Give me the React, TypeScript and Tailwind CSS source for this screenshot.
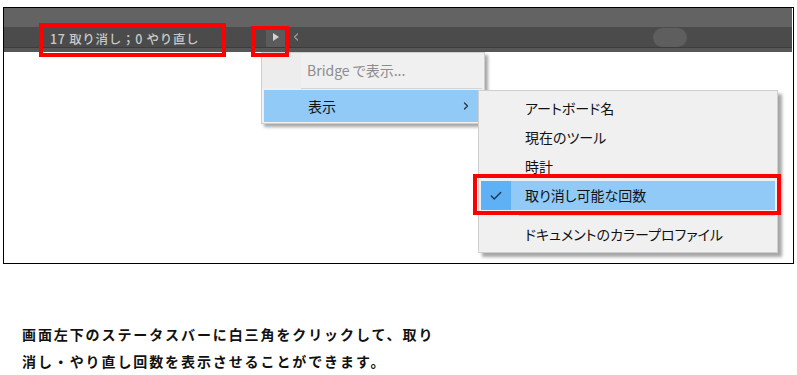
import { Check, ChevronRight, ChevronLeft } from "lucide-react";

const jp = "font-['Noto_Sans_CJK_JP','Noto_Sans',sans-serif] [font-feature-settings:'palt']";

function SubItem({ label, checked = false }: { label: string; checked?: boolean }) {
  if (checked) {
    return (
      <div className="mx-[2px] flex h-[29px] items-center bg-[#91c9f7]">
        <div className="flex h-full w-[30px] items-center justify-center bg-[#5eb1f5]">
          <Check className="h-[14px] w-[14px] text-[#1f3a52]" strokeWidth={2.5} />
        </div>
        <span className="pl-[14px] text-[14px] text-[#111]">{label}</span>
      </div>
    );
  }
  return (
    <div className="flex h-[29px] items-center pl-[46px]">
      <span className="text-[14px] text-[#111]">{label}</span>
    </div>
  );
}

export default function App() {
  return (
    <div className={`relative h-[375px] w-[797px] overflow-hidden bg-white ${jp}`}>
      {/* screenshot frame */}
      <div className="ml-[3px] mt-[7px] flex h-[257px] w-[791px] flex-col border border-black bg-white">
        <div className="h-[19px] w-[788px] bg-[#636363]" />
        <div className="flex h-[20px] w-[788px] items-center bg-[#4b4b4b]">
          <div className="w-[262px] shrink-0 pl-[46px]">
            <span className="text-[12.5px] font-medium tracking-[0.7px] text-[#c8c8c8] [font-feature-settings:normal]">
              17 取り消し；0 やり直し
            </span>
          </div>
          <div className="flex h-[19px] w-[20px] shrink-0 items-center justify-center bg-[#5b5b5b]">
            <svg width="6" height="8" viewBox="0 0 6 8">
              <path d="M0 0 L6 4 L0 8 Z" fill="#d2d2d2" />
            </svg>
          </div>
          <div className="w-[367px] shrink-0 pl-[4px]">
            <ChevronLeft className="h-[12px] w-[12px] text-[#9a9a9a]" strokeWidth={2.5} />
          </div>
          <div className="h-[19px] w-[34px] shrink-0 rounded-full bg-[#5e5e5e]" />
        </div>
        <div className="h-px w-[788px] bg-[#3c3c3c]" />
        <div className="h-[4px] w-[788px] bg-[#575757]" />
      </div>

      {/* caption */}
      <div className="ml-[22px] mt-[57px] text-[14px] font-bold leading-[27px] tracking-[1.9px] text-[#111] [font-feature-settings:normal]">
        <p>画面左下のステータスバーに白三角をクリックして、取り</p>
        <p>消し・やり直し回数を表示させることができます。</p>
      </div>

      {/* context menu */}
      <div className="absolute left-[261px] top-[52px] h-[72px] w-[224px] border border-[#cfcfcf] bg-[#f0f0f0] shadow-[3px_3px_3px_rgba(0,0,0,0.35)]">
        <div className="flex h-[35px]">
          <div className="w-[39px] bg-[#ededed]" />
          <div className="flex flex-1 items-center pl-[6px] text-[14px] text-[#8c8c8c]">Bridge で表示...</div>
        </div>
        <div className="ml-[39px] mr-[2px] h-px bg-[#d4d4d4]" />
        <div className="mx-[2px] mt-[1px] flex h-[32px] items-center justify-between bg-[#91c9f7] pl-[44px] pr-[10px]">
          <span className="text-[14px] text-[#111]">表示</span>
          <ChevronRight className="h-[12px] w-[12px] text-[#333]" strokeWidth={2.5} />
        </div>
      </div>

      {/* submenu */}
      <div className="absolute left-[478px] top-[90px] w-[300px] border border-[#cfcfcf] bg-[#f0f0f0] py-[3px] shadow-[4px_4px_3px_rgba(0,0,0,0.35)]">
        <SubItem label="アートボード名" />
        <SubItem label="現在のツール" />
        <SubItem label="時計" />
        <SubItem label="取り消し可能な回数" checked />
        <div className="flex h-[10px] items-center">
          <div className="ml-[40px] mr-[2px] h-px flex-1 bg-[#d4d4d4]" />
        </div>
        <SubItem label="ドキュメントのカラープロファイル" />
      </div>

      {/* red annotation boxes */}
      <div className="absolute left-[39px] top-[23px] h-[34px] w-[187px] border-4 border-[#ff0000]" />
      <div className="absolute left-[251px] top-[26px] h-[31px] w-[38px] border-4 border-[#ff0000]" />
      <div className="absolute left-[473px] top-[174px] h-[41px] w-[308px] border-4 border-[#ff0000]" />
    </div>
  );
}
